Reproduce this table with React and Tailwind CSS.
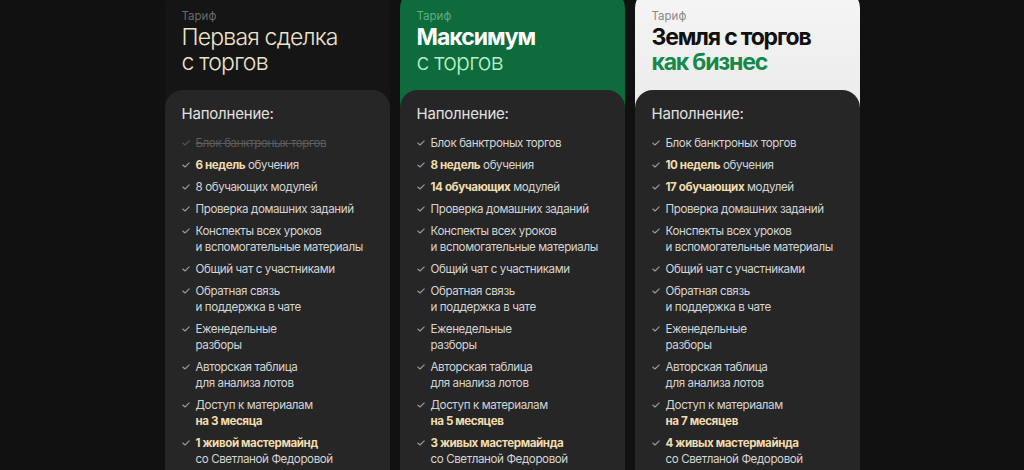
import React from 'react'

const font = { fontFamily: 'Inter, "Noto Sans", sans-serif' }

const plans = [
  {
    key: 'first',
    head: 'bg-[#151515]',
    title: (
      <>
        <div className="font-light tracking-[-0.8px] text-[#ece3cc]">Первая сделка</div>
        <div className="font-light tracking-[-0.8px] text-[#ece3cc]">с торгов</div>
      </>
    ),
    label: 'text-[#6a6a6a]',
    items: [
      { text: 'Блок банктроных торгов', off: true },
      { hl: '6 недель', text: ' обучения' },
      { text: '8 обучающих модулей' },
      { text: 'Проверка домашних заданий' },
      { lines: ['Конспекты всех уроков', 'и вспомогательные материалы'] },
      { text: 'Общий чат с участниками' },
      { lines: ['Обратная связь', 'и поддержка в чате'] },
      { lines: ['Еженедельные', 'разборы'] },
      { lines: ['Авторская таблица', 'для анализа лотов'] },
      { lines: ['Доступ к материалам'], hlLine: 'на 3 месяца' },
      { hlFirst: '1 живой мастермайнд', lines: ['со Светланой Федоровой'] },
    ],
  },
  {
    key: 'max',
    head: 'bg-[#0e6b3b]',
    title: (
      <>
        <div className="font-bold tracking-[-1px] text-white">Максимум</div>
        <div className="font-light tracking-[-0.8px] text-[#b9efcd]">с торгов</div>
      </>
    ),
    label: 'text-[#5fae82]',
    items: [
      { text: 'Блок банктроных торгов' },
      { hl: '8 недель', text: ' обучения' },
      { hl: '14 обучающих', text: ' модулей' },
      { text: 'Проверка домашних заданий' },
      { lines: ['Конспекты всех уроков', 'и вспомогательные материалы'] },
      { text: 'Общий чат с участниками' },
      { lines: ['Обратная связь', 'и поддержка в чате'] },
      { lines: ['Еженедельные', 'разборы'] },
      { lines: ['Авторская таблица', 'для анализа лотов'] },
      { lines: ['Доступ к материалам'], hlLine: 'на 5 месяцев' },
      { hlFirst: '3 живых мастермайнда', lines: ['со Светланой Федоровой'] },
    ],
  },
  {
    key: 'land',
    head: 'bg-gradient-to-b from-[#f5f5f5] to-[#cdcdcd]',
    title: (
      <>
        <div className="font-bold tracking-[-1.2px] text-[#111]">Земля с торгов</div>
        <div className="font-bold tracking-[-1.2px] text-[#14894a]">как бизнес</div>
      </>
    ),
    label: 'text-[#8a8a8a]',
    items: [
      { text: 'Блок банктроных торгов' },
      { hl: '10 недель', text: ' обучения' },
      { hl: '17 обучающих', text: ' модулей' },
      { text: 'Проверка домашних заданий' },
      { lines: ['Конспекты всех уроков', 'и вспомогательные материалы'] },
      { text: 'Общий чат с участниками' },
      { lines: ['Обратная связь', 'и поддержка в чате'] },
      { lines: ['Еженедельные', 'разборы'] },
      { lines: ['Авторская таблица', 'для анализа лотов'] },
      { lines: ['Доступ к материалам'], hlLine: 'на 7 месяцев' },
      { hlFirst: '4 живых мастермайнда', lines: ['со Светланой Федоровой'] },
    ],
  },
]

function Check({ off }) {
  return (
    <svg width="8" height="6" viewBox="0 0 8 6" className="mt-[5px] shrink-0">
      <polyline
        points="0.8,3 3,5 7.2,0.8"
        fill="none"
        stroke={off ? '#555' : '#9a9a9a'}
        strokeWidth="1.1"
        strokeLinecap="round"
        strokeLinejoin="round"
      />
    </svg>
  )
}

function Item({ item }) {
  const hlCls = 'font-bold text-[#f1dcae]'
  return (
    <li className="flex gap-[6px]">
      <Check off={item.off} />
      <div className={item.off ? 'text-[#5c5c5c] line-through whitespace-nowrap' : 'text-[#d4d4d4] whitespace-nowrap'}>
        {item.hlFirst && <div className={hlCls}>{item.hlFirst}</div>}
        {item.hl && (
          <div>
            <span className={hlCls}>{item.hl}</span>
            {item.text}
          </div>
        )}
        {!item.hl && item.text && <div>{item.text}</div>}
        {item.lines && item.lines.map((l) => <div key={l}>{l}</div>)}
        {item.hlLine && <div className={hlCls}>{item.hlLine}</div>}
      </div>
    </li>
  )
}

function Card({ plan }) {
  return (
    <div className={`w-[225px] rounded-t-[18px] overflow-hidden flex flex-col ${plan.head}`}>
      <div className="px-[17px] pt-[19px] h-[100px]">
        <div className={`text-[11.5px] leading-[14px] ${plan.label}`}>Тариф</div>
        <div className="mt-[2px] text-[23px] leading-[25px]">{plan.title}</div>
      </div>
      <div className="flex-1 bg-[#262626] rounded-t-[18px] px-[17px] pt-[14px]">
        <div className="text-[15px] leading-[20px] tracking-[-0.2px] text-[#e2e2e2]">Наполнение:</div>
        <ul className="mt-[11px] flex flex-col gap-[6px] text-[11.6px] leading-[16px] tracking-[-0.4px]">
          {plan.items.map((it, i) => (
            <Item key={i} item={it} />
          ))}
        </ul>
      </div>
    </div>
  )
}

export default function App() {
  return (
    <div style={font} className="h-[470px] w-full overflow-hidden bg-[#111111] flex justify-center">
      <div className="flex gap-[10px] -mt-[10px] h-[500px]">
        {plans.map((p) => (
          <Card key={p.key} plan={p} />
        ))}
      </div>
    </div>
  )
}
